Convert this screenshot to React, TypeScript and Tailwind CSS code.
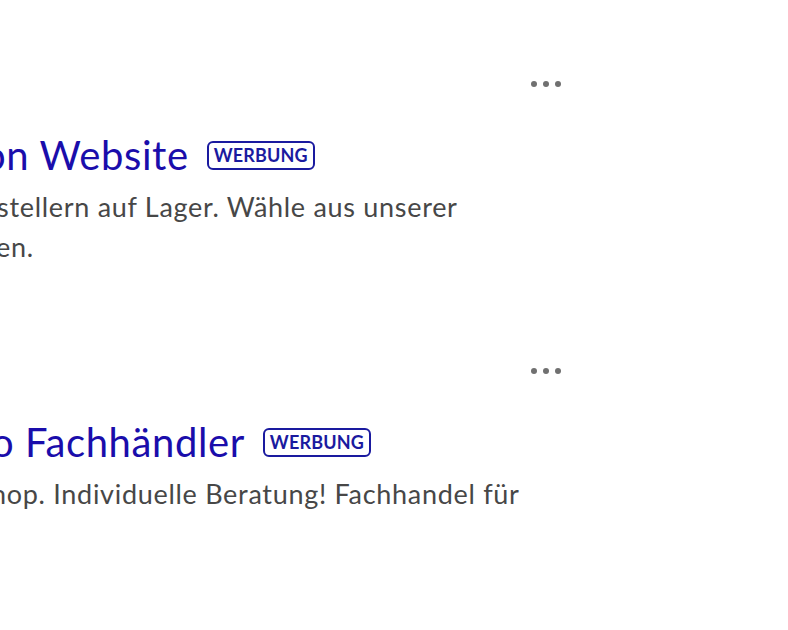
import React from "react";

const ads = [
  {
    title: "on Website",
    titleShift: "-ml-[17px]",
    lines: [
      { text: "stellern auf Lager. Wähle aus unserer", shift: "-ml-[3px]" },
      { text: "en.", shift: "-ml-[4px]" },
    ],
  },
  {
    title: "o Fachhändler",
    titleShift: "-ml-[9px]",
    lines: [{ text: "hop. Individuelle Beratung! Fachhandel für", shift: "-ml-[9px]" }],
  },
];

function Dots() {
  return (
    <div className="flex w-[561px] justify-end gap-[6px]">
      <span className="h-[6px] w-[6px] rounded-full bg-[#707070]" />
      <span className="h-[6px] w-[6px] rounded-full bg-[#707070]" />
      <span className="h-[6px] w-[6px] rounded-full bg-[#707070]" />
    </div>
  );
}

export default function App() {
  return (
    <div
      className="h-[630px] w-[788px] overflow-hidden bg-white pt-[81px]"
      style={{ fontFamily: "Lato, 'Open Sans', sans-serif" }}
    >
      {ads.map((ad, i) => (
        <div key={i} className={i > 0 ? "mt-[101px]" : ""}>
          <Dots />
          <div className={`mt-[44px] flex items-center whitespace-nowrap ${ad.titleShift}`}>
            <span className="text-[40px] leading-[48px] tracking-[0.6px] text-[#1a0dab]">{ad.title}</span>
            <span className="ml-[18px] mt-[1px] inline-flex h-[29px] items-center rounded-[6px] border-2 border-[#1a1a9f] px-[5px] text-[18px] font-bold tracking-[0.15px] text-[#1a1a9f]">
              WERBUNG
            </span>
          </div>
          <div className="mt-[8px] text-[27px] leading-[40px] tracking-[0.7px] text-[#474747]">
            {ad.lines.map((l, j) => (
              <div key={j} className={`whitespace-nowrap ${l.shift}`}>
                {l.text}
              </div>
            ))}
          </div>
        </div>
      ))}
    </div>
  );
}
